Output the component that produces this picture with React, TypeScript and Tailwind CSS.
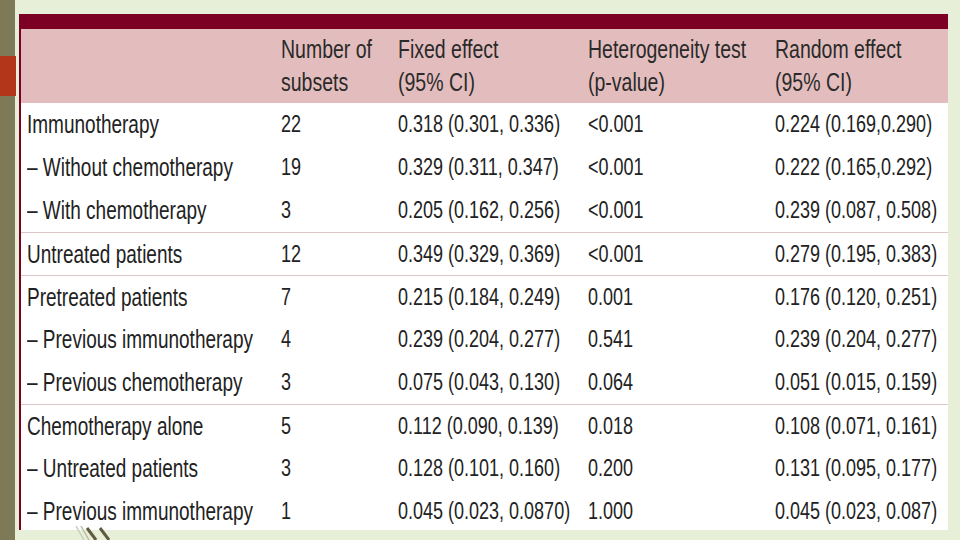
import React from "react";

const rows: { label: string; n: string; fixed: string; het: string; rand: string; sep?: boolean }[] = [
  { label: "Immunotherapy", n: "22", fixed: "0.318 (0.301, 0.336)", het: "<0.001", rand: "0.224 (0.169,0.290)" },
  { label: "– Without chemotherapy", n: "19", fixed: "0.329 (0.311, 0.347)", het: "<0.001", rand: "0.222 (0.165,0.292)" },
  { label: "– With chemotherapy", n: "3", fixed: "0.205 (0.162, 0.256)", het: "<0.001", rand: "0.239 (0.087, 0.508)" },
  { label: "Untreated patients", n: "12", fixed: "0.349 (0.329, 0.369)", het: "<0.001", rand: "0.279 (0.195, 0.383)", sep: true },
  { label: "Pretreated patients", n: "7", fixed: "0.215 (0.184, 0.249)", het: "0.001", rand: "0.176 (0.120, 0.251)", sep: true },
  { label: "– Previous immunotherapy", n: "4", fixed: "0.239 (0.204, 0.277)", het: "0.541", rand: "0.239 (0.204, 0.277)" },
  { label: "– Previous chemotherapy", n: "3", fixed: "0.075 (0.043, 0.130)", het: "0.064", rand: "0.051 (0.015, 0.159)" },
  { label: "Chemotherapy alone", n: "5", fixed: "0.112 (0.090, 0.139)", het: "0.018", rand: "0.108 (0.071, 0.161)", sep: true },
  { label: "– Untreated patients", n: "3", fixed: "0.128 (0.101, 0.160)", het: "0.200", rand: "0.131 (0.095, 0.177)" },
  { label: "– Previous immunotherapy", n: "1", fixed: "0.045 (0.023, 0.0870)", het: "1.000", rand: "0.045 (0.023, 0.087)" },
];

const grid = "grid grid-cols-[254px_117px_190px_187px_1fr] pl-[6px]";
const cell = "whitespace-nowrap scale-y-[1.32]";

export default function App() {
  return (
    <div className="relative w-[960px] h-[540px] overflow-hidden bg-[#e8efd9] flex font-['Liberation_Sans',Arial,sans-serif] text-[#222]">
      <div className="w-[15px] h-full bg-[#7e7a57] flex flex-col">
        <div className="mt-[56px] h-[40px] w-[16px] bg-[#b3361b]" />
      </div>
      <div className="ml-[4px] mt-[14px] w-[929px] h-[516px] flex flex-col overflow-hidden border-l-2 border-[#7b0024] bg-white">
        <div className="h-[15px] shrink-0 bg-[#7b0024]" />
        <div className={`${grid} h-[74px] shrink-0 items-center bg-[#e3bdbd] text-[19.5px] leading-[25px] text-[#2a2a2a]`}>
          <div />
          <div className={cell}>Number of<br />subsets</div>
          <div className={cell}>Fixed effect<br />(95% CI)</div>
          <div className={cell}>Heterogeneity test<br />(p-value)</div>
          <div className={cell}>Random effect<br />(95% CI)</div>
        </div>
        {rows.map((r, i) => (
          <div
            key={i}
            className={`${grid} h-[43px] shrink-0 items-center leading-[43px] ${r.sep ? "border-t border-[#dcc6c6]" : ""}`}
          >
            <div className={`${cell} text-[19px]`}>{r.label}</div>
            <div className={`${cell} text-[18px]`}>{r.n}</div>
            <div className={`${cell} text-[18px]`}>{r.fixed}</div>
            <div className={`${cell} text-[18px]`}>{r.het}</div>
            <div className={`${cell} text-[18px]`}>{r.rand}</div>
          </div>
        ))}
      </div>
      <svg className="absolute left-[70px] top-[524px]" width="50" height="16" viewBox="0 0 50 16">
        <line x1="6" y1="2" x2="14" y2="16" stroke="#c9ccb6" strokeWidth="1.5" />
        <line x1="11" y1="2" x2="19" y2="16" stroke="#b9bca4" strokeWidth="1.5" />
        <line x1="17" y1="4" x2="26" y2="16" stroke="#5e5b40" strokeWidth="3" />
        <line x1="30" y1="4" x2="39" y2="16" stroke="#5e5b40" strokeWidth="3" />
      </svg>
    </div>
  );
}
